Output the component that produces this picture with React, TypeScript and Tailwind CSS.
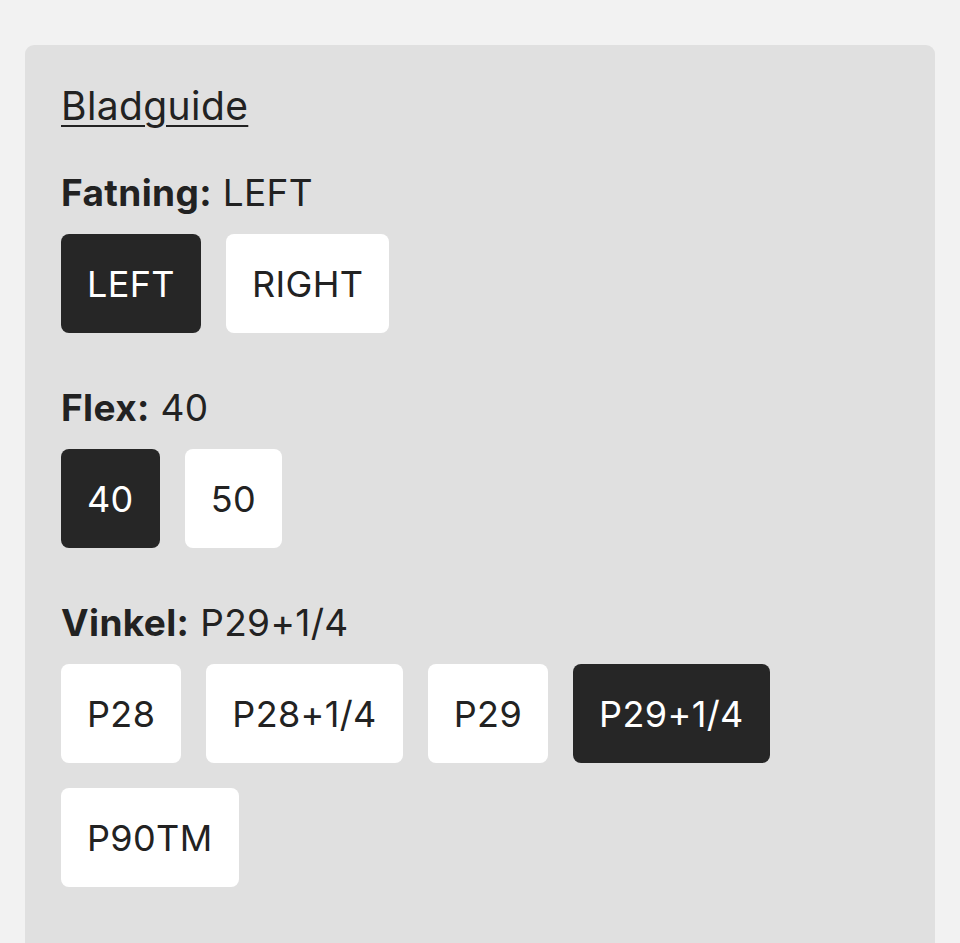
const groups = [
  { label: "Fatning", value: "LEFT", options: ["LEFT", "RIGHT"] },
  { label: "Flex", value: "40", options: ["40", "50"] },
  { label: "Vinkel", value: "P29+1/4", options: ["P28", "P28+1/4", "P29", "P29+1/4", "P90TM"] },
];

const App = () => {
  return (
    <main className="min-h-screen bg-[#f2f2f2] px-[25px] pt-[45px] font-['Inter',sans-serif] text-[#222]">
      <section className="min-h-[920px] rounded-[9px] bg-[#e0e0e0] pl-[36px] pr-[37px] pt-[37px]">
        <a href="#" className="block text-[39px] leading-[48px] tracking-[0.01em] underline decoration-[2px] underline-offset-[5px]">
          Bladguide
        </a>
        <div className="mt-[39px] flex flex-col gap-[51px]">
          {groups.map((g) => (
            <div key={g.label}>
              <p className="text-[37px] leading-[48px] tracking-[0.01em]">
                <span className="font-bold">{g.label}:</span> {g.value}
              </p>
              <div className="mt-[17px] flex flex-wrap gap-[25px] pr-[40px]">
                {g.options.map((o) => (
                  <button
                    key={o}
                    className={
                      o === g.value
                        ? "h-[99px] rounded-[8px] bg-[#262626] px-[26px] text-[36px] tracking-[0.01em] text-white"
                        : "h-[99px] rounded-[8px] bg-white px-[26px] text-[36px] tracking-[0.01em] text-[#222]"
                    }
                  >
                    {o}
                  </button>
                ))}
              </div>
            </div>
          ))}
        </div>
      </section>
    </main>
  );
};

export default App;
